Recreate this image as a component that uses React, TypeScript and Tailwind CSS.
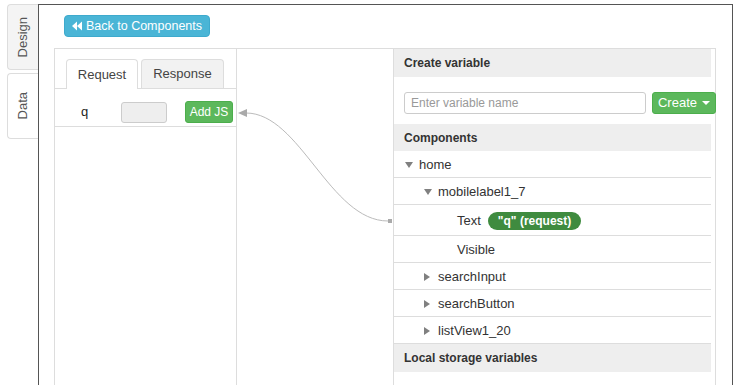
import React from "react";

const TREE = [
  { label: "home", indent: "pl-[11px]", caret: "down" },
  { label: "mobilelabel1_7", indent: "pl-[30px]", caret: "down" },
  { label: "Text", indent: "pl-[63px]", caret: "none", badge: '"q" (request)' },
  { label: "Visible", indent: "pl-[63px]", caret: "none" },
  { label: "searchInput", indent: "pl-[30px]", caret: "right" },
  { label: "searchButton", indent: "pl-[30px]", caret: "right" },
  { label: "listView1_20", indent: "pl-[30px]", caret: "right" },
];

function Caret({ dir }: { dir: string }) {
  if (dir === "down") {
    return (
      <svg width="8" height="6" viewBox="0 0 8 6" className="mr-[6px] shrink-0">
        <polygon points="0,0 8,0 4,6" fill="#808080" />
      </svg>
    );
  }
  if (dir === "right") {
    return (
      <svg width="6" height="8" viewBox="0 0 6 8" className="mr-[8px] shrink-0">
        <polygon points="0,0 6,4 0,8" fill="#808080" />
      </svg>
    );
  }
  return null;
}

function SideTab({ text, active }: { text: string; active?: boolean }) {
  return (
    <div
      className={`w-[31px] h-[66px] border border-r-0 border-[#ddd] rounded-l-[4px] flex items-center justify-center ${
        active ? "bg-white" : "bg-[#f4f4f4]"
      }`}
    >
      <span className="[writing-mode:vertical-rl] rotate-180 text-[13px] text-[#555]">
        {text}
      </span>
    </div>
  );
}

function Header({ text, h }: { text: string; h: string }) {
  return (
    <div className={`${h} bg-[#eee] pl-[10px] flex items-center text-[12px] font-bold text-[#333]`}>
      {text}
    </div>
  );
}

export default function App() {
  return (
    <div className="relative w-[740px] h-[385px] overflow-hidden bg-white flex font-['Liberation_Sans',Arial,sans-serif] text-[#333]">
      {/* side tabs */}
      <div className="w-[38px] shrink-0 pt-[4px] pl-[7px] flex flex-col gap-[3px]">
        <SideTab text="Design" />
        <SideTab text="Data" active />
      </div>

      {/* main panel */}
      <div className="mt-[4px] mr-[7px] flex-1 h-[420px] border-l border-t border-r border-[#555] pl-[15px] pr-[16px] pt-[10px]">
        <button className="ml-[10px] h-[22px] w-[146px] rounded-[4px] bg-[#4ab5d6] border border-[#3eaacd] flex items-center justify-center gap-[4px] text-white text-[12.5px]">
          <svg width="10" height="10" viewBox="0 0 10 10">
            <polygon points="0,5 5,0.5 5,9.5" fill="#fff" />
            <polygon points="5,5 10,0.5 10,9.5" fill="#fff" />
          </svg>
          Back to Components
        </button>

        <div className="mt-[11px] flex h-[400px] border-t border-l border-r border-[#ddd]">
          {/* request / response */}
          <div className="w-[182px] shrink-0 border-r border-[#ddd]">
            <div className="pt-[10px] pl-[11px] flex gap-[3px] border-b border-[#ddd]">
              <div className="w-[72px] h-[30px] -mb-px bg-white border border-b-0 border-[#ddd] rounded-t-[4px] flex items-center justify-center text-[13px] text-[#444]">
                Request
              </div>
              <div className="w-[83px] h-[29px] bg-[#f2f2f2] border border-b-0 border-[#ddd] rounded-t-[4px] flex items-center justify-center text-[13px] text-[#444]">
                Response
              </div>
            </div>
            <div className="h-[38px] border-b border-[#ddd] flex items-center pl-[26px] pt-[9px]">
              <span className="w-[40px] text-[13px] text-[#222]">q</span>
              <div className="w-[46px] h-[21px] bg-[#eee] border border-[#ccc] rounded-[3px]" />
              <button className="ml-[18px] w-[48px] h-[22px] bg-[#5cb85c] border border-[#4cae4c] rounded-[3px] text-white text-[12px]">
                Add JS
              </button>
            </div>
          </div>

          {/* canvas */}
          <div className="flex-1" />

          {/* variables */}
          <div className="w-[322px] shrink-0 border-l border-[#ddd] pr-[4px]">
            <Header text="Create variable" h="h-[28px]" />
            <div className="pt-[15px] pb-[10px] pl-[10px] flex">
              <input
                placeholder="Enter variable name"
                className="w-[242px] h-[22px] shrink-0 border border-[#ccc] rounded-[3px] px-[6px] text-[12px] placeholder:text-[#999] outline-none"
              />
              <button className="ml-[6px] w-[64px] h-[22px] shrink-0 bg-[#5cb85c] border border-[#4cae4c] rounded-[3px] text-white text-[13px] flex items-center justify-center gap-[5px]">
                Create
                <span className="w-0 h-0 border-l-[4px] border-r-[4px] border-t-[4px] border-l-transparent border-r-transparent border-t-white" />
              </button>
            </div>
            <Header text="Components" h="h-[27px]" />
            {TREE.map((row, i) => (
              <div
                key={i}
                className={`${row.badge ? "h-[31px]" : "h-[27px]"} ${row.indent} pt-[2px] border-b border-[#ddd] flex items-center text-[13px] text-[#333]`}
              >
                <Caret dir={row.caret} />
                <span>{row.label}</span>
                {row.badge && (
                  <span className="ml-[7px] h-[18px] px-[10px] rounded-full bg-[#3f8b3f] text-white text-[12px] font-bold flex items-center">
                    {row.badge}
                  </span>
                )}
              </div>
            ))}
            <Header text="Local storage variables" h="h-[28px]" />
          </div>
        </div>
      </div>

      {/* connector */}
      <svg
        className="absolute left-0 top-0 pointer-events-none"
        width="740"
        height="385"
        viewBox="0 0 740 385"
      >
        <path d="M 246 113 C 300 113, 330 221, 388 221" fill="none" stroke="#bbb" strokeWidth="1" />
        <polygon points="238,113 247,109 247,117" fill="#aaa" />
        <rect x="388" y="219" width="4" height="4" fill="#aaa" />
      </svg>
    </div>
  );
}
